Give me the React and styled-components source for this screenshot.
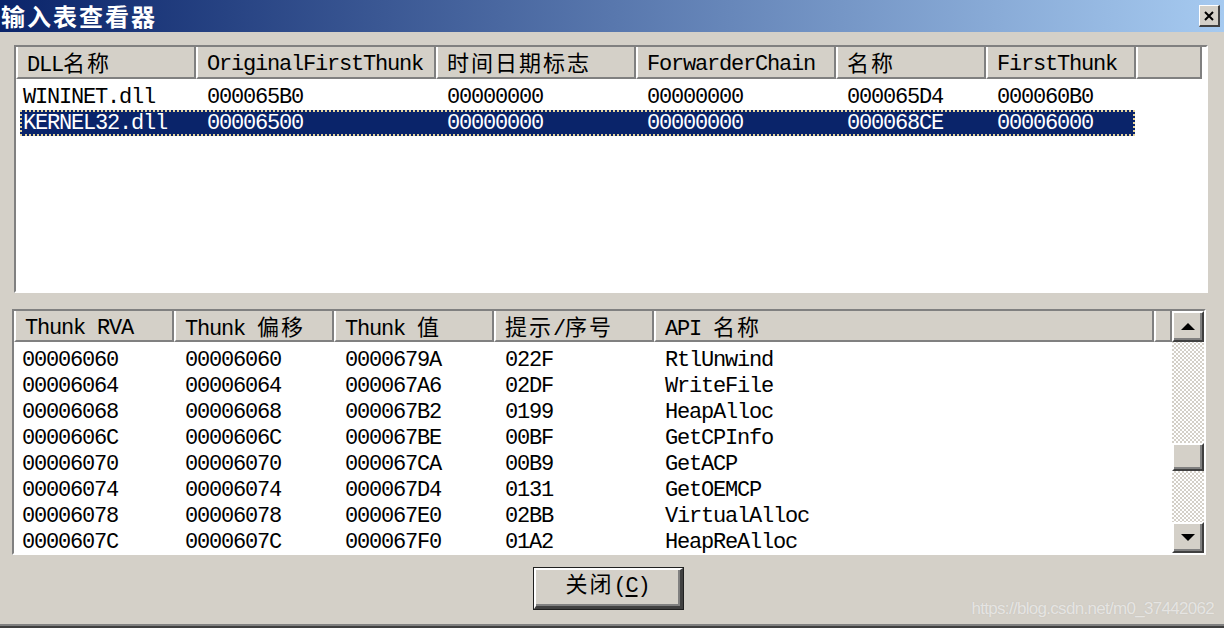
import React from "react";
import styled, { createGlobalStyle } from "styled-components";

// ----------- Data -----------
const dlls = [
  ["WININET.dll", "000065B0", "00000000", "00000000", "000065D4", "000060B0"],
  ["KERNEL32.dll", "00006500", "00000000", "00000000", "000068CE", "00006000"],
];

const thunks = [
  ["00006060", "00006060", "0000679A", "022F", "RtlUnwind"],
  ["00006064", "00006064", "000067A6", "02DF", "WriteFile"],
  ["00006068", "00006068", "000067B2", "0199", "HeapAlloc"],
  ["0000606C", "0000606C", "000067BE", "00BF", "GetCPInfo"],
  ["00006070", "00006070", "000067CA", "00B9", "GetACP"],
  ["00006074", "00006074", "000067D4", "0131", "GetOEMCP"],
  ["00006078", "00006078", "000067E0", "02BB", "VirtualAlloc"],
  ["0000607C", "0000607C", "000067F0", "01A2", "HeapReAlloc"],
];

const topCols = [180, 240, 200, 200, 150, 150, 66];
const topRowCols = [176, 240, 200, 200, 150, 149];
const bottomCols = [160, 160, 160, 160, 500, 18];

// ----------- Styled Components -----------
const GlobalStyle = createGlobalStyle`
  html, body { margin: 0; padding: 0; background: #d4d0c8; }
  * { box-sizing: border-box; }
`;

const Window = styled.div`
  position: relative;
  width: 1224px;
  height: 628px;
  overflow: hidden;
  background: #d4d0c8;
  display: flex;
  flex-direction: column;
  box-shadow: inset 0 -2px 0 #404040, inset 0 -4px 0 #808080;
  font-family: "Liberation Mono", "Noto Sans CJK SC", monospace;
  font-size: 22px;
  letter-spacing: -1.2px;
  color: #000;
`;

const TitleBar = styled.div`
  height: 32px;
  flex-shrink: 0;
  display: flex;
  align-items: center;
  justify-content: space-between;
  padding: 0 4px 0 1px;
  background: linear-gradient(to right, #0a246a, #a6caf0);
`;

const TitleText = styled.div`
  font-family: "Noto Sans CJK SC", sans-serif;
  font-weight: 700;
  font-size: 24px;
  letter-spacing: 2px;
  color: #fff;
  line-height: 30px;
`;

const CloseBtn = styled.div`
  width: 21px;
  height: 22px;
  background: #d4d0c8;
  border-top: 1px solid #fff;
  border-left: 1px solid #fff;
  border-right: 2px solid #404040;
  border-bottom: 2px solid #404040;
  display: flex;
  align-items: center;
  justify-content: center;
`;

const Body = styled.div`
  flex: 1;
  display: flex;
  flex-direction: column;
  padding-top: 13px;
`;

const ListView = styled.div`
  margin-left: ${(p) => p.$ml}px;
  margin-top: ${(p) => p.$mt || 0}px;
  width: 1194px;
  height: ${(p) => p.$h}px;
  flex-shrink: 0;
  background: #fff;
  border-top: 2px solid #808080;
  border-left: 2px solid #808080;
  border-right: 2px solid #fff;
  border-bottom: 2px solid #fff;
  display: flex;
  overflow: hidden;
`;

const ListMain = styled.div`
  flex: 1;
  display: flex;
  flex-direction: column;
  min-width: 0;
`;

const HeaderRow = styled.div`
  display: flex;
  flex-shrink: 0;
`;

const HeaderCell = styled.div`
  width: ${(p) => p.$w}px;
  height: ${(p) => p.$h}px;
  flex-shrink: 0;
  background: #d4d0c8;
  border-left: 2px solid #fff;
  border-right: 2px solid #808080;
  border-bottom: 2px solid #808080;
  padding: 8px 0 0 9px;
  line-height: 20px;
  white-space: pre;
`;

const Han = styled.span`
  font-family: "Noto Sans CJK SC", sans-serif;
  font-size: 22px;
  line-height: 0.6;
  letter-spacing: 2px;
`;

const Rows = styled.div`
  padding-top: ${(p) => p.$pt}px;
`;

const Row = styled.div`
  display: flex;
  height: 26px;
  margin-left: ${(p) => p.$ml}px;
  width: ${(p) => (p.$full ? "auto" : "1115px")};
  background: ${(p) => (p.$selected ? "#0a246a" : "transparent")};
  color: ${(p) => (p.$selected ? "#fff" : "#000")};
  outline: ${(p) => (p.$selected ? "2px dotted #e6d49a" : "none")};
  outline-offset: -2px;
`;

const Cell = styled.div`
  width: ${(p) => p.$w}px;
  flex-shrink: 0;
  padding-left: ${(p) => p.$pl}px;
  line-height: 27px;
  white-space: nowrap;
`;

const ScrollBar = styled.div`
  width: 32px;
  flex-shrink: 0;
  display: flex;
  flex-direction: column;
  background-color: #fff;
  background-image: repeating-conic-gradient(#d4d0c8 0% 25%, #fff 0% 50%);
  background-size: 4px 4px;
`;

const ScrollBtn = styled.div`
  height: ${(p) => p.$h}px;
  flex-shrink: 0;
  background: #d4d0c8;
  border-top: 2px solid #fff;
  border-left: 2px solid #fff;
  border-right: 2px solid #404040;
  border-bottom: 2px solid #404040;
  box-shadow: inset -2px -2px 0 #808080;
  display: flex;
  align-items: center;
  justify-content: center;
`;

const Track = styled.div`
  flex: 1;
  display: flex;
  flex-direction: column;
  padding-top: ${(p) => p.$pt}px;
`;

const Footer = styled.div`
  display: flex;
  justify-content: center;
  padding: 13px 8px 0 0;
`;

const PushButton = styled.div`
  width: 149px;
  height: 41px;
  padding-top: 6px;
  line-height: 22px;
  text-align: center;
  background: #d4d0c8;
  border-top: 2px solid #fff;
  border-left: 2px solid #fff;
  border-right: 3px solid #404040;
  border-bottom: 3px solid #404040;
  box-shadow: 0 0 0 1px #202020, inset -2px -2px 0 #808080;
`;

const Underline = styled.span`
  text-decoration: underline;
  text-underline-offset: 3px;
`;

const Watermark = styled.div`
  position: absolute;
  right: 10px;
  bottom: 9px;
  font-family: "Liberation Sans", Arial, sans-serif;
  font-size: 17px;
  letter-spacing: -0.7px;
  color: rgba(255, 255, 255, 0.6);
  text-shadow: 0 0 1px rgba(150, 150, 150, 0.35);
`;

// ----------- Icons -----------
const CloseIcon = () => (
  <svg width="10" height="10" viewBox="0 0 10 10">
    <path d="M1 1 L9 9 M9 1 L1 9" stroke="#000" strokeWidth="2" />
  </svg>
);

const Arrow = ({ down }) => (
  <svg width="14" height="8" viewBox="0 0 14 8">
    <polygon points={down ? "0,0 14,0 7,7" : "7,0 14,7 0,7"} fill="#000" />
  </svg>
);

// ------------- Main Page ----------------
function App() {
  return (
    <Window>
      <GlobalStyle />
      <TitleBar>
        <TitleText>输入表查看器</TitleText>
        <CloseBtn>
          <CloseIcon />
        </CloseBtn>
      </TitleBar>

      <Body>
        {/* DLL list */}
        <ListView $ml={14} $h={248}>
          <ListMain>
            <HeaderRow>
              <HeaderCell $w={topCols[0]} $h={32}>DLL<Han>名称</Han></HeaderCell>
              <HeaderCell $w={topCols[1]} $h={32}>OriginalFirstThunk</HeaderCell>
              <HeaderCell $w={topCols[2]} $h={32}><Han>时间日期标志</Han></HeaderCell>
              <HeaderCell $w={topCols[3]} $h={32}>ForwarderChain</HeaderCell>
              <HeaderCell $w={topCols[4]} $h={32}><Han>名称</Han></HeaderCell>
              <HeaderCell $w={topCols[5]} $h={32}>FirstThunk</HeaderCell>
              <HeaderCell $w={topCols[6]} $h={32} />
            </HeaderRow>
            <Rows $pt={5}>
              {dlls.map((row, i) => (
                <Row key={row[0]} $ml={4} $selected={i === 1}>
                  {row.map((v, j) => (
                    <Cell key={j} $w={topRowCols[j]} $pl={j === 0 ? 3 : 11}>
                      {v}
                    </Cell>
                  ))}
                </Row>
              ))}
            </Rows>
          </ListMain>
        </ListView>

        {/* Thunk list */}
        <ListView $ml={12} $mt={16} $h={246}>
          <ListMain>
            <HeaderRow>
              <HeaderCell $w={bottomCols[0]} $h={31}>Thunk RVA</HeaderCell>
              <HeaderCell $w={bottomCols[1]} $h={31}>Thunk <Han>偏移</Han></HeaderCell>
              <HeaderCell $w={bottomCols[2]} $h={31}>Thunk <Han>值</Han></HeaderCell>
              <HeaderCell $w={bottomCols[3]} $h={31}><Han>提示</Han>/<Han>序号</Han></HeaderCell>
              <HeaderCell $w={bottomCols[4]} $h={31}>API <Han>名称</Han></HeaderCell>
              <HeaderCell $w={bottomCols[5]} $h={31} />
            </HeaderRow>
            <Rows $pt={5}>
              {thunks.map((row) => (
                <Row key={row[0]} $ml={0} $full>
                  {row.map((v, j) => (
                    <Cell key={j} $w={bottomCols[j]} $pl={j === 0 ? 8 : 11}>
                      {v}
                    </Cell>
                  ))}
                </Row>
              ))}
            </Rows>
          </ListMain>
          <ScrollBar>
            <ScrollBtn $h={31}>
              <Arrow />
            </ScrollBtn>
            <Track $pt={101}>
              <ScrollBtn $h={28} />
            </Track>
            <ScrollBtn $h={31}>
              <Arrow down />
            </ScrollBtn>
          </ScrollBar>
        </ListView>

        <Footer>
          <PushButton>
            <Han>关闭</Han>(<Underline>C</Underline>)
          </PushButton>
        </Footer>
      </Body>

      <Watermark>https://blog.csdn.net/m0_37442062</Watermark>
    </Window>
  );
}

export default App;
